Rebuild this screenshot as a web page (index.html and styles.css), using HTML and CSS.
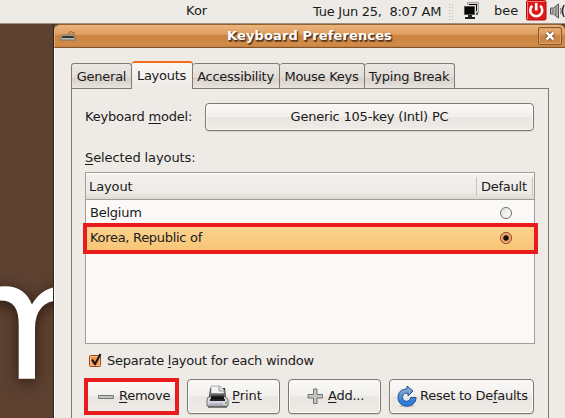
FILE: index.html
```html
<!DOCTYPE html>
<html lang="en">
<head>
<meta charset="utf-8">
<title>Keyboard Preferences</title>
<link rel="stylesheet" href="styles.css">
</head>
<body>
<header class="panel">
  <span class="kor">Kor</span>
  <span class="clock">Tue Jun 25,&nbsp; 8:07 AM</span>
  <span class="grip"></span>
  <svg class="net" width="18" height="18" viewBox="0 0 18 18">
    <path d="M4 0h12v11H4z" fill="#a9a8a2"/><path d="M5.500 1.500h9v8h-9z" fill="#050505" stroke="#d5d4ce"/><path d="M10 11h5v2h-5z" fill="#555"/>
    <path d="M0 3h13v11H0z" fill="#e7e6e1"/><path d="M1.500 4.500h10v8h-10z" fill="#050505" stroke="#50534c"/><path d="M5 13h4v2h3v2H2v-2h3z" fill="#20211e"/>
  </svg>
  <span class="user">bee</span>
  <svg class="power" width="21" height="21" viewBox="0 0 21 21">
    <rect x=".5" y=".5" width="19.500" height="19.500" rx="1.500" fill="#df1717" stroke="#b90c0c"/>
    <path d="M1.500 19V1.500H19" fill="none" stroke="#f27777"/>
    <path d="M6.300 5.700a6 6 0 1 0 7.900 0" fill="none" stroke="#fff" stroke-width="2.500"/><path d="M10.200 3v7.500" stroke="#fff" stroke-width="2.600"/>
  </svg>
  <svg class="sound" width="15" height="18" viewBox="0 0 15 18">
    <path d="M.5 6h3l5-4v14l-5-4h-3z" fill="#b5b5b2" stroke="#555"/><path d="M3 7v4M6 5v8" stroke="#666"/><path d="M10.500 6q1.500 3 0 6" fill="none" stroke="#777" stroke-width="1.300"/><path d="M14 3q-3 6 0 12" fill="none" stroke="#333" stroke-width="1.600"/>
  </svg>
</header>
<main class="desktop">
  <div class="wallpaper"><span class="brand">m</span></div>
  <section class="window">
    <div class="titlebar">
      <svg class="kbd" width="16" height="10" viewBox="0 0 16 10"><path d="M9 4V2q1-2 3-1 3 0 2 3" fill="none" stroke="#8a6236"/><path d="M2 4h12l1.500 5H.5z" fill="#b9bbb4" stroke="#80776a"/><path d="M2.500 5h11l.5 2H2z" fill="#30342f"/></svg>
      <h1>Keyboard Preferences</h1>
      <div class="close"><svg width="10" height="10" viewBox="0 0 10 10"><path d="M1.500 1.500l7 7M8.500 1.500l-7 7" stroke="#704318" stroke-width="4.200"/><path d="M1.500 1.500l7 7M8.500 1.500l-7 7" stroke="#fff" stroke-width="2.500"/></svg></div>
    </div>
    <div class="content">
      <nav class="tabs">
        <div class="tab t1"><span>General</span></div>
        <div class="tab active"><span>Layouts</span></div>
        <div class="tab t3"><span>Accessibility</span></div>
        <div class="tab t4"><span>Mouse Keys</span></div>
        <div class="tab t5"><span>Typing Break</span></div>
      </nav>
      <div class="page">
        <div class="model"><span class="model-label">Keyboard <u>m</u>odel:</span><div class="button model-button"><span>Generic 105-key (Intl) PC</span></div></div>
        <div class="selected"><u>S</u>elected layouts:</div>
        <div class="list">
          <div class="head"><span class="h1">Layout</span><span class="h2">Default</span></div>
          <div class="row"><span class="belgium">Belgium</span><i class="radio"></i></div>
          <div class="row chosen"><span class="korea">Korea, Republic of</span><i class="radio on"></i></div>
        </div>
        <div class="separate">
          <svg width="14" height="15" viewBox="0 0 14 15"><rect x="1.500" y="2.500" width="11" height="11" rx="1" fill="#f5944f" stroke="#984b1e"/><path d="M2.500 3.500h9v9h-9z" fill="none" stroke="#ffbd82"/><path d="M4 6.500l3 4.500L12.500 1" fill="none" stroke="#111" stroke-width="2"/></svg>
          <span>Separate <u>l</u>ayout for each window</span>
        </div>
        <div class="actions">
          <div class="button remove"><svg width="17" height="6" viewBox="0 0 17 6"><path d="M.5 1.500h15v3H.5z" fill="#c1c4bd" stroke="#777b73"/></svg><span><u>R</u>emove</span></div>
          <div class="button print">
            <svg width="23" height="24" viewBox="0 0 23 24">
              <defs><linearGradient id="ink" x2="0" y2="1"><stop stop-color="#999"/><stop offset=".7" stop-color="#111"/></linearGradient></defs>
              <path d="M4 3h15l1 10H3z" fill="#2c2c2c"/><path d="M2 12h18l2 3v6H1v-6z" fill="#d7d5e2" stroke="#706e78"/><path d="M5 1h9l4 4v8H5z" fill="#f3f3f1" stroke="#aaa"/><path d="M13 1v5h5" fill="#ddd" stroke="#999"/><path d="M5 8h13v6H5z" fill="url(#ink)"/><path d="M4 14h15v2H4z" fill="#222"/><path d="M3 19h14" stroke="#9795a8"/><path d="M19 18h2" stroke="#79b83c" stroke-width="2"/><path d="M2 22h19" stroke="#555" stroke-width="1.500"/>
            </svg><span><u>P</u>rint</span></div>
          <div class="button add"><svg width="17" height="17" viewBox="0 0 17 17"><path d="M6.500 1h3.500v5.500h5.500V10H10v5.500H6.500V10H1V6.500h5.500z" fill="#c4c6c1" stroke="#70746d"/></svg><span><u>A</u>dd...</span></div>
          <div class="button reset">
            <svg width="20" height="23" viewBox="0 0 20 23">
              <defs><linearGradient id="blue" x2="0" y2="1"><stop offset=".2" stop-color="#86a8d1"/><stop offset=".75" stop-color="#2e7edb"/></linearGradient></defs>
              <ellipse cx="10" cy="21" rx="8" ry="1.500" fill="#cbc8c3"/><path d="M10 1l6 5-5 5V8.200C7 8 5.500 10 5.500 12.500c0 5 8 5 8 0H19C19 24 1 24 1 12.500 1 7 4.500 4 10 4z" fill="url(#blue)" stroke="#244f96" stroke-linejoin="round"/>
            </svg><span>Reset to De<u>f</u>aults</span></div>
        </div>
      </div>
    </div>
  </section>
</main>
</body>
</html>
```
FILE: styles.css
```css
* { box-sizing: border-box; }
body { margin: 0; width: 565px; height: 418px; overflow: hidden; font: 13px/16px "DejaVu Sans", sans-serif; letter-spacing: -.25px; color: #1a1a1a; background: #eeebe7; }
span, h1, .selected { white-space: nowrap; }
svg { display: block; flex: none; }
u { text-decoration: underline; text-decoration-thickness: 1px; text-underline-offset: 2px; text-decoration-skip-ink: none; }

.panel { height: 24px; display: flex; align-items: flex-start; background: #eeebe7; border-bottom: 1px solid #9e8f80; overflow: hidden; }
.panel > * { flex: none; }
.kor { width: 127px; margin-left: 186px; padding-top: 3px; letter-spacing: 0; }
.clock { width: 135px; padding-top: 4px; }
.grip { width: 5px; height: 17px; margin-top: 3px; background: radial-gradient(circle, #bdb9b4 .8px, transparent 1px) 0 0 / 3px 3px; }
.net { margin: 2px 0 0 10px; }
.user { width: 33px; margin-left: 13px; padding-top: 3px; letter-spacing: 0; }
.power { margin-left: -1px; }
.sound { margin: 2px 0 0 3px; }

.desktop { display: flex; height: 394px; }
.wallpaper { flex: none; width: 54px; overflow: hidden; background: #5c4030; border-right: 1px solid #33251d; position: relative; }
.brand { position: absolute; left: -53px; top: 213px; font-size: 163px; line-height: 170px; letter-spacing: 0; color: #fff; -webkit-text-stroke: 1.5px #fff; text-shadow: 0 3px 14px #25140d; }
.window { flex: none; width: 511px; background: #5c4030; }
.titlebar { height: 24px; display: flex; align-items: center; border-top: 1px solid #93622f; border-bottom: 1px solid #80542f; border-left: 1px solid #e3ad75; border-radius: 6px 6px 0 0; background: linear-gradient(#eab47d, #df9f61 40%, #c9823f 50%, #d28c49 90%, #c67e3d); }
.kbd { margin-left: 5px; }
h1 { margin: 0 0 1px 151px; width: 167px; font-size: 13px; line-height: 16px; letter-spacing: .13px; color: #fff; text-shadow: 1px 1px 1px #4b321d, 1px 2px 1px #6d4523; }
.close { margin-left: 144px; width: 24px; height: 18px; border: 1px solid #87582e; border-radius: 2px; display: grid; place-items: center; box-shadow: inset 0 0 0 1px #dca36a; }

.content { height: 370px; padding: 13px 17px 0; background: #eeebe7; border-left: 1px solid #fff; }
.tabs { height: 27px; margin-left: -1px; display: flex; align-items: flex-end; }
.tab { height: 25px; border: 1px solid #867a70; border-left-width: 0; border-radius: 3px 3px 0 0; background: linear-gradient(#ebe7e3, #e2ddd8 55%, #d8d1ca 60%, #e8e3df); padding: 5px 1px 0 0; display: flex; justify-content: center; flex: none; border-bottom: 0; }
.t1 { width: 61px; border-left-width: 1px; padding-right: 0; }
.active { width: 61px; height: 27px; border-top: 2px solid #ef6c1a; background: linear-gradient(#f9f7f5, #eeebe7); }
.t3 { width: 87px; } .t4 { width: 85px; } .t5 { width: 90px; }
.page { width: 478px; height: 331px; margin-left: -1px; border: solid #867a70; border-width: 0 1px; padding: 15px 13px 0; background: linear-gradient(#867a70, #867a70) 0 0 / 60px 1px no-repeat, linear-gradient(#867a70, #867a70) 120px 0 / 360px 1px no-repeat, #eeebe7; }

.model { display: flex; align-items: center; height: 28px; }
.model-label { width: 120px; letter-spacing: -.2px; }
.button { height: 35px; display: flex; align-items: center; border: 1px solid #81776c; border-radius: 4px; background: linear-gradient(#faf9f8, #f2f0ed 48%, #e9e5e1 52%, #efece8); box-shadow: inset 0 0 0 1px #faf9f7, 0 1px 0 #d8d3cd; flex: none; }
.model-button { width: 329px; height: 28px; justify-content: center; letter-spacing: -.2px; }
.selected { margin-top: 19px; height: 22px; letter-spacing: -.1px; }
.list { width: 450px; height: 172px; border: 1px solid #a79c91; background: #faf9f7; }
.head { height: 27px; display: flex; align-items: center; border-bottom: 1px solid #a79c91; background: linear-gradient(#f3f0ed, #eeebe7 75%, #ddd9d4); box-shadow: inset 0 1px #fff; letter-spacing: 0; }
.h1 { width: 387px; padding: 2px 0 0 3px; letter-spacing: -.1px; }
.h2 { height: 19px; width: 57px; line-height: 19px; padding-left: 4px; border: solid #c7c2bd; border-width: 0 1px; margin-left: 3px; letter-spacing: -.25px; }
.row { height: 25px; display: flex; align-items: center; padding-left: 4px; }
.row > span { width: 410px; }
.radio { width: 12px; height: 12px; border: 1px solid #6b6b67; border-radius: 50%; background: linear-gradient(135deg, #e1e1df, #fff); }
.radio.on { border-color: #884117; background: radial-gradient(circle, #171310 0 2.200px, #f19761 3.200px); box-shadow: inset 0 0 0 1px #ffc49b; }
.chosen { width: 455px; height: 31px; margin: -2px 0 0 -3px; padding: 0 0 1px 3px; border: 4px solid #e81c1d; background: linear-gradient(#fdd28f, #f7c577); position: relative; letter-spacing: -.3px; }
.separate { display: flex; height: 16px; margin-top: 9px; padding-left: 3px; gap: 5px; }
.actions { display: flex; align-items: center; height: 37px; margin-top: 9px; margin-left: -1px; gap: 8px; }
.actions span { padding-bottom: 2px; }
.remove { width: 95px; height: 37px; border: 4px solid #e81c1d; border-radius: 0; padding-left: 10px; gap: 4px; box-shadow: none; }
.print { width: 93px; padding-left: 18px; gap: 3px; letter-spacing: 0; }
.add { width: 93px; padding-left: 18px; gap: 4px; }
.reset { width: 145px; padding-left: 7px; gap: 3px; }
```
